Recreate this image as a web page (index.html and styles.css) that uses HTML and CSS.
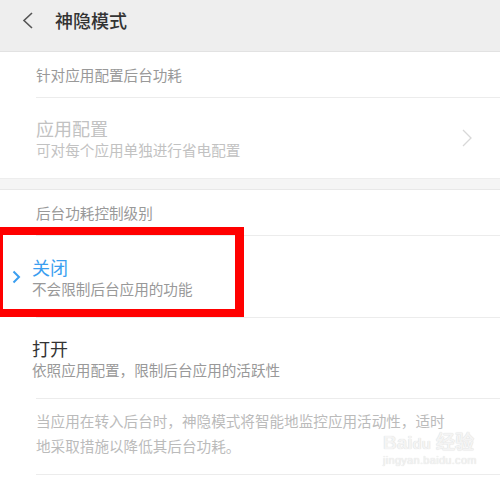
FILE: index.html
```html
<!DOCTYPE html>
<html lang="zh-CN">
<head>
  <meta charset="UTF-8">
  <meta name="viewport" content="width=device-width, initial-scale=1.0">
  <title>神隐模式</title>
  <link rel="stylesheet" href="styles.css">
</head>
<body>
  <header class="topbar">
    <svg class="back" width="12" height="17" viewBox="0 0 12 17">
      <path d="M10 1 L2 8.5 L10 16" fill="none" stroke="#555" stroke-width="1.6"/>
    </svg>
    <h1>神隐模式</h1>
  </header>

  <section class="group">
    <div class="group-title">针对应用配置后台功耗</div>
    <div class="row disabled">
      <div class="row-text">
        <div class="row-title">应用配置</div>
        <div class="row-sub">可对每个应用单独进行省电配置</div>
      </div>
      <svg class="arrow" width="10" height="18" viewBox="0 0 10 18">
        <path d="M1 1 L9 9 L1 17" fill="none" stroke="#d8d8d8" stroke-width="1.3"/>
      </svg>
    </div>
  </section>

  <div class="spacer"></div>

  <section class="group">
    <div class="group-title">后台功耗控制级别</div>
    <div class="row option selected">
      <svg class="check" width="9" height="14" viewBox="0 0 9 14">
        <path d="M1.5 1.5 L7 7 L1.5 12.5" fill="none" stroke="#3a9ef0" stroke-width="2"/>
      </svg>
      <div class="row-text">
        <div class="row-title">关闭</div>
        <div class="row-sub">不会限制后台应用的功能</div>
      </div>
      <div class="mark"></div>
    </div>
    <div class="row option">
      <div class="row-text">
        <div class="row-title">打开</div>
        <div class="row-sub">依照应用配置，限制后台应用的活跃性</div>
      </div>
    </div>
    <div class="note">
      <span>当应用在转入后台时，神隐模式将智能地监控应用活动性，适时</span>
      <span>地采取措施以降低其后台功耗。</span>
    </div>
  </section>

  <div class="stamp">
    <div class="stamp-logo">Bai<span>du</span> 经验</div>
    <div class="stamp-url">jingyan.baidu.com</div>
  </div>
</body>
</html>
```

FILE: styles.css
```css
* {
  margin: 0;
  padding: 0;
  box-sizing: border-box;
}
body {
  width: 500px;
  height: 477px;
  overflow: hidden;
  position: relative;
  background: #fff;
  font-family: "Noto Sans CJK SC", "Noto Sans", sans-serif;
  color: #333;
}
.topbar {
  height: 52px;
  padding: 0 0 11px 22px;
  display: flex;
  align-items: center;
  background: #eeeeee;
  border-bottom: 1px solid #e2e2e2;
}
.topbar h1 {
  margin-left: 21px;
  font-size: 18px;
  font-weight: 500;
  color: #333;
}
.group-title {
  height: 46px;
  margin-left: 36px;
  display: flex;
  align-items: center;
  font-size: 14.6px;
  color: #999;
  border-bottom: 1px solid #ececec;
}
.row {
  position: relative;
  height: 80px;
  padding-left: 36px;
  display: flex;
  align-items: center;
}
.row-text {
  flex: 1;
}
.row-title {
  font-size: 18px;
  line-height: 22px;
}
.row-sub {
  font-size: 14.6px;
  line-height: 21px;
  color: #999;
}
.disabled .row-title,
.disabled .row-sub {
  color: #c2c2c2;
}
.arrow {
  margin-right: 28px;
}
.option {
  height: 82px;
  padding-left: 32px;
}
.option::after {
  content: "";
  position: absolute;
  left: 36px;
  right: 0;
  bottom: 0;
  border-bottom: 1px solid #ececec;
}
.option + .option {
  height: 81px;
}
.selected .row-title {
  color: #3a9ef0;
}
.check {
  position: absolute;
  left: 12px;
  top: 34px;
}
.mark {
  position: absolute;
  left: -5px;
  top: -9px;
  width: 249px;
  height: 90px;
  border: 8px solid #ff0000;
  border-right-width: 9px;
}
.spacer {
  height: 12px;
  background: #f5f5f5;
  border-top: 1px solid #ededed;
  border-bottom: 1px solid #e8e8e8;
}
.note {
  margin-left: 36px;
  padding: 9px 0 16px 0;
  font-size: 14.6px;
  line-height: 25px;
  color: #bbb;
  border-bottom: 1px solid #ececec;
}
.note span {
  display: table;
}
.stamp {
  position: absolute;
  left: 383px;
  top: 432px;
  color: #f4f4f4;
  text-shadow: 0 0 1px #cfcfcf;
  font-family: "Liberation Sans", sans-serif;
}
.stamp-logo {
  font-size: 19px;
  font-weight: bold;
  line-height: 21px;
}
.stamp-logo span {
  font-size: 15px;
}
.stamp-url {
  font-size: 11px;
  line-height: 13px;
  letter-spacing: 0.3px;
}
```
